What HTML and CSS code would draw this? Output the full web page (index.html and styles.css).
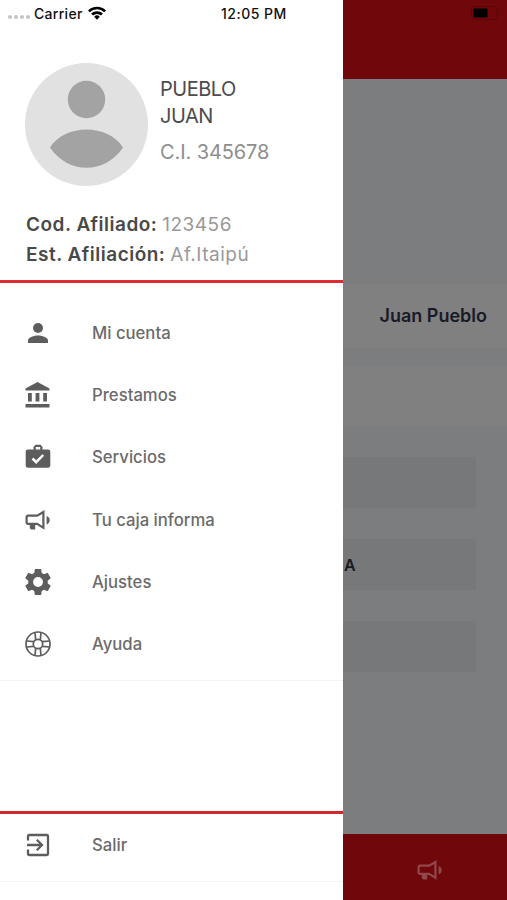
FILE: index.html
```html
<!DOCTYPE html>
<html lang="es">
<head>
<meta charset="utf-8">
<title>Menú</title>
<link rel="stylesheet" href="styles.css">
</head>
<body>
<svg width="0" height="0" class="defs">
  <symbol id="horn" viewBox="0 0 26 24">
    <path d="M3 7.700h9.200L18.400 4v15.800l-6.200-4H3a1.400 1.400 0 0 1-1.400-1.400V9.100A1.400 1.400 0 0 1 3 7.700z" fill="none" stroke="currentColor" stroke-width="2.200"/>
    <path d="M4.800 15h5.400v6.600H6.200L4.800 20.200z M21.600 8c4.200 1.200 4.200 7.200 0 8.400z" fill="currentColor"/>
  </symbol>
</svg>
<div class="screen">
  <aside class="drawer">
    <header class="status">
      <span class="signal"><i></i><i></i><i></i><i></i></span>
      <span class="carrier">Carrier</span>
      <svg class="wifi" viewBox="0 0 18 14"><path d="M0 4.400a13 13 0 0 1 18 0l-1.800 1.900a10.300 10.300 0 0 0-14.400 0z M3.100 7.600a8.500 8.500 0 0 1 11.800 0L13 9.500a5.800 5.800 0 0 0-8 0z M6.200 10.700a4 4 0 0 1 5.600 0L9 13.700z"/></svg>
      <span class="time">12:05 PM</span>
    </header>
    <section class="profile">
      <div class="person">
        <svg class="avatar" viewBox="0 0 123 123"><circle cx="61.500" cy="61.500" r="61.500" fill="#e1e1e1"/><circle cx="61.500" cy="36.500" r="18.700" fill="#a3a3a3"/><path d="M25 84.500C40 60.500 83 60.500 98 84.500C80 111.500 43 111.500 25 84.500z" fill="#a3a3a3"/></svg>
        <div class="names"><div class="surname">PUEBLO</div><div class="surname">JUAN</div><div class="ci">C.I. 345678</div></div>
      </div>
      <div class="details">
        <p><b>Cod. Afiliado:</b> <span>123456</span></p>
        <p><b>Est. Afiliación:</b> <span>Af.Itaipú</span></p>
      </div>
    </section>
    <nav class="menu">
      <a><svg viewBox="0 0 26 26"><circle cx="13" cy="8" r="5"/><path d="M3 23v-2.500c0-3.300 6.600-5 10-5s10 1.700 10 5V23z"/></svg><span>Mi cuenta</span></a>
      <a><svg viewBox="0 0 26 26"><path d="M.5 8.500v-2L12.500 0l12 6.500v2z M3 11h3.800v8.500H3z M10.600 11h3.800v8.500h-3.800z M18.200 11H22v8.500h-3.800z M.5 22h24v3.600H.5z"/></svg><span>Prestamos</span></a>
      <a><svg viewBox="0 0 26 26"><path fill-rule="evenodd" d="M8.500 5.500V3l2-2.200h5l2 2.200v2.500H23a2.300 2.300 0 0 1 2.300 2.300v13.700a2.300 2.300 0 0 1-2.300 2.300H3a2.300 2.300 0 0 1-2.300-2.300V7.800A2.300 2.300 0 0 1 3 5.500zM10.800 5.500h4.400V3h-4.400z"/><path class="tick" d="m7.500 14.500 3.700 3.700 7-7.200"/></svg><span>Servicios</span></a>
      <a><svg viewBox="0 0 26 24"><use href="#horn"/></svg><span>Tu caja informa</span></a>
      <a><svg class="gear" viewBox="2 2 20 20"><path d="M19.430 12.980c.04-.32.070-.64.070-.98s-.03-.66-.07-.98l2.110-1.650c.19-.15.240-.42.120-.64l-2-3.460c-.12-.22-.39-.3-.61-.22l-2.490 1c-.52-.4-1.080-.73-1.690-.98l-.38-2.650A.488.488 0 0 0 14 2h-4c-.25 0-.46.180-.49.420l-.38 2.650c-.61.250-1.170.59-1.690.98l-2.490-1c-.23-.09-.49 0-.61.220l-2 3.460c-.13.220-.07.490.12.640l2.110 1.650c-.04.320-.07.650-.07.980s.03.660.070.980l-2.110 1.650c-.19.150-.24.420-.12.640l2 3.460c.12.220.39.300.61.220l2.490-1c.52.400 1.080.730 1.690.980l.38 2.650c.03.240.24.420.49.420h4c.25 0 .46-.18.490-.42l.38-2.650c.61-.25 1.170-.59 1.690-.98l2.490 1c.23.090.49 0 .61-.22l2-3.460c.12-.22.070-.49-.12-.64zM12 15.800a3.800 3.800 0 1 1 0-7.600 3.800 3.800 0 0 1 0 7.600z"/></svg><span>Ajustes</span></a>
      <a><svg class="line" viewBox="0 0 26 26"><circle cx="13" cy="13" r="12"/><circle cx="13" cy="13" r="4.700"/><path d="M10 1.500l.7 7.300M16 1.500l-.7 7.300M10.700 17.200l-.7 7.300M15.300 17.200l.7 7.300M1.500 10l7.300.7M1.500 16l7.300-.7M17.200 10.700l7.300-.7M17.200 15.300l7.300.7"/></svg><span>Ayuda</span></a>
    </nav>
    <footer class="exit">
      <a><svg class="leave" viewBox="0 0 26 26"><path d="M3 8.500V4.200A1.200 1.200 0 0 1 4.200 3h17.600A1.200 1.200 0 0 1 23 4.200v17.600a1.200 1.200 0 0 1-1.200 1.200H4.200A1.200 1.200 0 0 1 3 21.800v-4.300M2 13h14.500M11.800 7.800 17 13l-5.200 5.200"/></svg><span>Salir</span></a>
    </footer>
  </aside>
  <main class="page">
    <div class="topbar"><svg class="battery" viewBox="0 0 30 14"><rect x=".5" y=".5" width="25.500" height="13" rx="3.500" fill="none" stroke="#5c0608"/><rect x="2.500" y="2.500" width="14" height="9" rx="1" fill="#000"/><path d="M27.500 4.500q2.500 2.500 0 5z" fill="#5c0608"/></svg></div>
    <div class="content">
      <div class="card name">Juan Pueblo</div>
      <div class="card blank"></div>
      <div class="field"></div>
      <div class="field">A</div>
      <div class="field"></div>
    </div>
    <div class="tabs"><svg viewBox="0 0 26 24"><use href="#horn"/></svg></div>
  </main>
</div>
</body>
</html>
```
FILE: styles.css
```css
* { box-sizing: border-box; }
body { margin: 0; font-family: Inter, "Liberation Sans", sans-serif; }
.defs { display: block; }
.screen { display: grid; grid-template-columns: 343px 1fr; height: 900px; overflow: hidden; }
.drawer { display: flex; flex-direction: column; background: #fff; white-space: nowrap; }
.status { display: flex; align-items: center; height: 26px; padding-left: 8px; font-size: 14px; font-weight: 500; color: #111; }
.signal { display: flex; gap: 2px; width: 26px; padding-top: 8px; }
.signal i { width: 4px; height: 4px; border-radius: 50%; background: #c4c4c4; }
.carrier { width: 49px; letter-spacing: .3px; }
.wifi { width: 18px; height: 14px; margin-left: 5px; fill: #000; }
.time { margin-left: 115px; letter-spacing: .5px; }
.profile { height: 257px; padding: 37px 25px 0; border-bottom: 3px solid #df2b2f; }
.person { display: flex; gap: 12px; }
.avatar { width: 123px; height: 123px; }
.names { padding-top: 13px; font-size: 20px; line-height: 27px; color: #4c4c4c; }
.surname { letter-spacing: -.5px; }
.ci { margin-top: 9px; letter-spacing: -.1px; color: #8e8e8e; }
.details { margin-top: 24px; padding-left: 1px; font-size: 19px; line-height: 30px; letter-spacing: .5px; color: #999; }
.details p { margin: 0; }
.details b { font-weight: 600; color: #494949; }
.details span { margin-left: -1px; }
.menu { height: 398px; padding-top: 18.500px; border-bottom: 1px solid #f3f3f3; }
.menu a, .exit a { display: flex; align-items: center; height: 62.300px; padding-left: 25px; font-size: 16.700px; font-weight: 500; color: #6b6b6b; }
.menu svg, .exit svg { width: 26px; height: 26px; margin-right: 41px; fill: #5d5d5d; color: #5d5d5d; }
.menu .tick { fill: none; stroke: #fff; stroke-width: 2.500; }
.menu .line { fill: none; stroke: #5d5d5d; stroke-width: 1.700; }
.exit { height: 71px; margin-top: 130px; border-top: 3px solid #cf292f; border-bottom: 1px solid #f3f3f3; }
.exit .leave { fill: none; stroke: #5d5d5d; stroke-width: 2.300; }
.page { display: flex; flex-direction: column; background: #7b7d7e; }
.topbar { display: flex; height: 79px; padding: 6px 6px 0 0; justify-content: flex-end; background: #6f070b; }
.battery { width: 30px; height: 14px; }
.content { flex: 1; padding-top: 205px; color: #191a25; font-weight: 600; }
.card { height: 64px; margin-bottom: 18px; background: #808080; }
.name { display: flex; align-items: center; justify-content: flex-end; padding: 0 20px 2px 0; font-size: 18px; }
.blank { height: 60px; margin-bottom: 31px; }
.field { display: flex; align-items: center; width: 133px; height: 51px; margin-bottom: 31px; padding-left: 1px; background: #777879; font-size: 16px; }
.tabs { display: flex; justify-content: center; height: 66px; padding: 24px 0 0 10px; background: #6f070b; color: #91484c; }
.tabs svg { width: 26px; height: 24px; }
```
